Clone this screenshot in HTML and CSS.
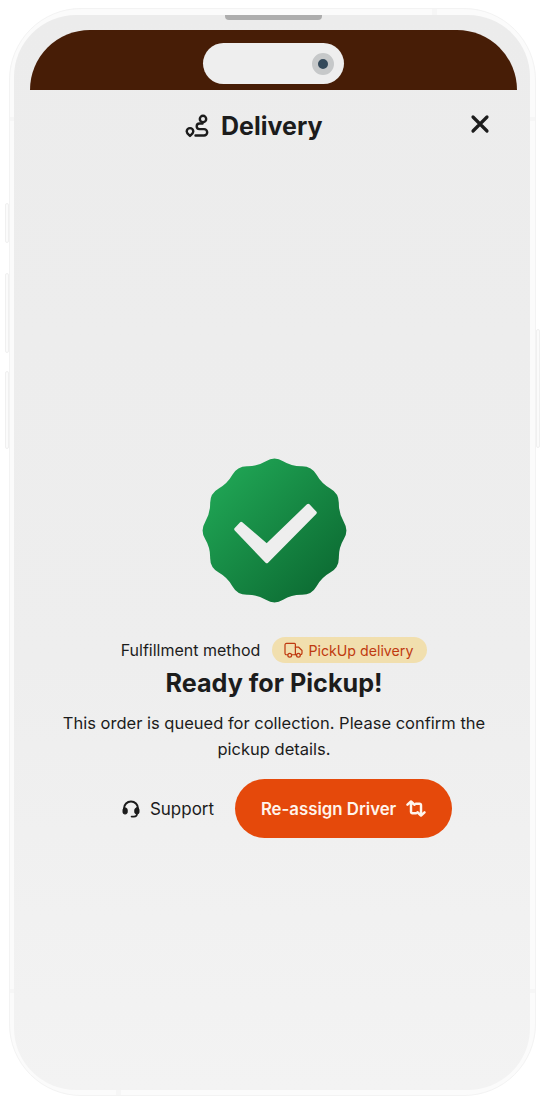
FILE: index.html
```html
<!DOCTYPE html>
<html lang="en">
<head>
    <meta charset="UTF-8">
    <meta name="viewport" content="width=device-width, initial-scale=1.0">
    <title>Delivery</title>
    <link rel="stylesheet" href="styles.css">
</head>
<body>
    <div class="phone">
        <span class="side-btn side-btn-mute"></span>
        <span class="side-btn side-btn-up"></span>
        <span class="side-btn side-btn-down"></span>
        <span class="side-btn side-btn-power"></span>
        <span class="band band-left-top"></span>
        <span class="band band-right-top"></span>
        <span class="band band-left-bottom"></span>
        <span class="band band-right-bottom"></span>
        <span class="band band-top"></span>
        <span class="band band-bottom"></span>

        <div class="screen">
            <span class="speaker"></span>

            <div class="status-bar">
                <div class="island">
                    <span class="camera"></span>
                </div>
            </div>

            <header class="header">
                <div class="header-title">
                    <svg class="route-icon" viewBox="0 0 24 24" fill="none" stroke="currentColor" stroke-width="2.4" stroke-linecap="round" stroke-linejoin="round">
                        <circle cx="18" cy="5" r="3.2"/>
                        <path d="M17.500 9.500h-3a2.800 2.800 0 0 0 0 5.600h4.500a3 3 0 0 1 0 6.400H10.500"/>
                        <path d="M5 22c-1.800-1.700-3.300-2.900-3.300-4.600a3.300 3.300 0 0 1 6.600 0c0 1.700-1.500 2.900-3.300 4.600z"/>
                    </svg>
                    <h2>Delivery</h2>
                </div>
                <svg class="close-icon" viewBox="0 0 20 20" fill="none" stroke="currentColor" stroke-width="3.2" stroke-linecap="round">
                    <path d="M3 3l14 14M17 3L3 17"/>
                </svg>
            </header>

            <main class="content">
                <svg class="seal" viewBox="-72.500 -72.500 145 145">
                    <defs>
                        <linearGradient id="sealFill" x1="0.1" y1="0.1" x2="0.9" y2="0.9">
                            <stop offset="0" stop-color="#20a655"/>
                            <stop offset="1" stop-color="#0c6a32"/>
                        </linearGradient>
                    </defs>
                    <path fill="url(#sealFill)" d="M-8.600,-69.350 Q0,-74.500 8.600,-69.350 Q17.200,-64.200 27.200,-64.350 Q37.250,-64.500 42.100,-55.750 Q47,-47 55.750,-42.100 Q64.500,-37.250 64.350,-27.200 Q64.200,-17.200 69.350,-8.600 Q74.500,0 69.350,8.600 Q64.200,17.200 64.350,27.200 Q64.500,37.250 55.750,42.100 Q47,47 42.100,55.750 Q37.250,64.500 27.200,64.350 Q17.200,64.200 8.600,69.350 Q0,74.500 -8.600,69.350 Q-17.200,64.200 -27.200,64.350 Q-37.250,64.500 -42.100,55.750 Q-47,47 -55.750,42.100 Q-64.500,37.250 -64.350,27.200 Q-64.200,17.200 -69.350,8.600 Q-74.500,0 -69.350,-8.600 Q-64.200,-17.200 -64.350,-27.200 Q-64.500,-37.250 -55.750,-42.100 Q-47,-47 -42.100,-55.750 Q-37.250,-64.500 -27.200,-64.350 Q-17.200,-64.200 -8.600,-69.350 Z"/>
                    <polygon fill="#eeeeee" stroke="#eeeeee" stroke-width="3.500" stroke-linejoin="round" points="-38.500,-1.200 -33.300,-6.800 -7.700,15 33.700,-25 40.500,-17.700 -7.700,31"/>
                </svg>

                <div class="method">
                    <span>Fulfillment method</span>
                    <span class="pill">
                        <svg class="truck-icon" viewBox="0 0 20 18" fill="none" stroke="currentColor" stroke-width="1.300" stroke-linecap="round" stroke-linejoin="round">
                            <path d="M4 13.500H2.500a1.500 1.500 0 0 1-1.500-1.500V3a1.500 1.500 0 0 1 1.500-1.500H11a1 1 0 0 1 1 1v11H8"/>
                            <path d="M12 5.500h3.500l3.500 3.500v3a1.500 1.500 0 0 1-1.500 1.500H17M13.500 13.500H12"/>
                            <circle cx="6" cy="14" r="2"/>
                            <circle cx="15.200" cy="14" r="2"/>
                        </svg>
                        PickUp delivery
                    </span>
                </div>

                <h1>Ready for Pickup!</h1>
                <p class="message">This order is queued for collection. Please confirm the pickup details.</p>

                <div class="actions">
                    <a class="support">
                        <svg class="headset-icon" viewBox="0 0 18 18" fill="none" stroke="currentColor" stroke-linecap="round" stroke-linejoin="round">
                            <path stroke-width="2" d="M2 10V8.500a7 7 0 0 1 14 0V10"/>
                            <rect x="1" y="8" width="4.200" height="6" rx="1.800" fill="currentColor" stroke-width="1"/>
                            <rect x="12.800" y="8" width="4.200" height="6" rx="1.800" fill="currentColor" stroke-width="1"/>
                            <path stroke-width="1.600" d="M15 14c0 1.700-1.500 2.600-3 2.600H9.500"/>
                        </svg>
                        Support
                    </a>
                    <button class="reassign">
                        Re-assign Driver
                        <svg class="repeat-icon" viewBox="0 0 21 18" fill="none" stroke="currentColor" stroke-width="2.600" stroke-linecap="round" stroke-linejoin="round">
                            <path d="M1.500 5l3.700-3.500L9 5M5.200 2v10.500a1.500 1.500 0 0 0 1.500 1.500H10.500"/>
                            <path d="M19.500 13l-3.700 3.500L12 13M15.800 16V5.500A1.500 1.500 0 0 0 14.300 4H10.500"/>
                        </svg>
                    </button>
                </div>
            </main>
        </div>
    </div>
</body>
</html>
```

FILE: styles.css
```css
body {
    font-family: "Inter", "Noto Sans", sans-serif;
    margin: 0;
    background-color: #ffffff;
    color: #1c1c1c;
}
.phone {
    position: relative;
    box-sizing: border-box;
    width: 527px;
    height: 1088px;
    margin: 8px 0 0 9px;
    padding: 6px 5px 5px 4px;
    background-color: #fbfbfb;
    border: 1px solid #f3f3f3;
    border-radius: 72px;
    display: flex;
}
.side-btn {
    position: absolute;
    width: 4px;
    background-color: #fbfbfb;
    border: 1px solid #f0f0f0;
    border-radius: 2px;
    box-sizing: border-box;
}
.side-btn-mute {
    left: -5px;
    top: 194px;
    height: 40px;
}
.side-btn-up {
    left: -5px;
    top: 264px;
    height: 80px;
}
.side-btn-down {
    left: -5px;
    top: 362px;
    height: 78px;
}
.side-btn-power {
    right: -5px;
    top: 320px;
    height: 119px;
}
.band {
    position: absolute;
    background-color: #f6f6f6;
}
.band-left-top, .band-right-top, .band-left-bottom, .band-right-bottom {
    width: 5px;
    height: 4px;
}
.band-left-top {
    left: 0;
    top: 108px;
}
.band-right-top {
    right: 0;
    top: 108px;
}
.band-left-bottom {
    left: 0;
    top: 980px;
}
.band-right-bottom {
    right: 0;
    top: 980px;
}
.band-top, .band-bottom {
    width: 5px;
    height: 6px;
}
.band-top {
    left: 422px;
    top: 0;
}
.band-bottom {
    left: 106px;
    bottom: 0;
}
.screen {
    position: relative;
    flex: 1;
    display: flex;
    flex-direction: column;
    background: linear-gradient(180deg, #ececec 0%, #eeeeee 60%, #f3f3f3 100%);
    border-radius: 62px;
    overflow: hidden;
}
.speaker {
    position: absolute;
    top: 0;
    left: 211px;
    width: 97px;
    height: 5px;
    background-color: #adadad;
    border-radius: 0 0 4px 4px;
}
.status-bar {
    position: relative;
    height: 60px;
    margin: 15px 13px 0 16px;
    background-color: #471d06;
    border-radius: 60px 60px 0 0;
    flex-shrink: 0;
}
.island {
    position: absolute;
    left: 173px;
    top: 13px;
    width: 141px;
    height: 41px;
    background-color: #eeeeee;
    border-radius: 21px;
}
.camera {
    position: absolute;
    right: 10px;
    top: 10px;
    width: 10px;
    height: 10px;
    border: 6px solid #c6c8c9;
    background-color: #34495a;
    border-radius: 50%;
    box-sizing: content-box;
}
.header {
    display: flex;
    align-items: center;
    justify-content: space-between;
    height: 72px;
    padding: 0 40px 0 171px;
}
.header-title {
    display: flex;
    align-items: center;
    gap: 12px;
}
.header-title h2 {
    margin: 0;
    font-size: 25px;
    font-weight: 700;
}
.route-icon {
    width: 24px;
    height: 24px;
}
.close-icon {
    width: 20px;
    height: 20px;
    margin-top: -4px;
}
.content {
    display: flex;
    flex-direction: column;
    align-items: center;
    padding: 296px 45px 0 49px;
}
.seal {
    width: 145px;
    height: 145px;
}
.method {
    display: flex;
    align-items: center;
    gap: 12px;
    margin-top: 34px;
    font-size: 16px;
}
.pill {
    display: flex;
    align-items: center;
    gap: 5px;
    height: 26px;
    padding: 0 14px 0 12px;
    background-color: #f1dfae;
    color: #bf3a10;
    border-radius: 13px;
    font-size: 14.200px;
}
.truck-icon {
    width: 19px;
    height: 17px;
}
h1 {
    margin: 3px 0 0 0;
    font-size: 25.200px;
    line-height: 34px;
    font-weight: 700;
    text-align: center;
}
.message {
    margin: 10px -10px 0 -10px;
    font-size: 16.500px;
    line-height: 26px;
    text-align: center;
}
.actions {
    display: flex;
    align-items: center;
    gap: 21px;
    margin: 17px 0 0 26px;
}
.support {
    display: flex;
    align-items: center;
    gap: 10px;
    font-size: 17px;
}
.headset-icon {
    width: 18px;
    height: 18px;
}
.reassign {
    display: flex;
    align-items: center;
    justify-content: center;
    gap: 10px;
    width: 217px;
    height: 59px;
    background-color: #e5490b;
    color: #fff4ec;
    border: none;
    border-radius: 30px;
    font-family: inherit;
    font-size: 16.800px;
    font-weight: 600;
}
.repeat-icon {
    width: 20px;
    height: 17px;
}
```
